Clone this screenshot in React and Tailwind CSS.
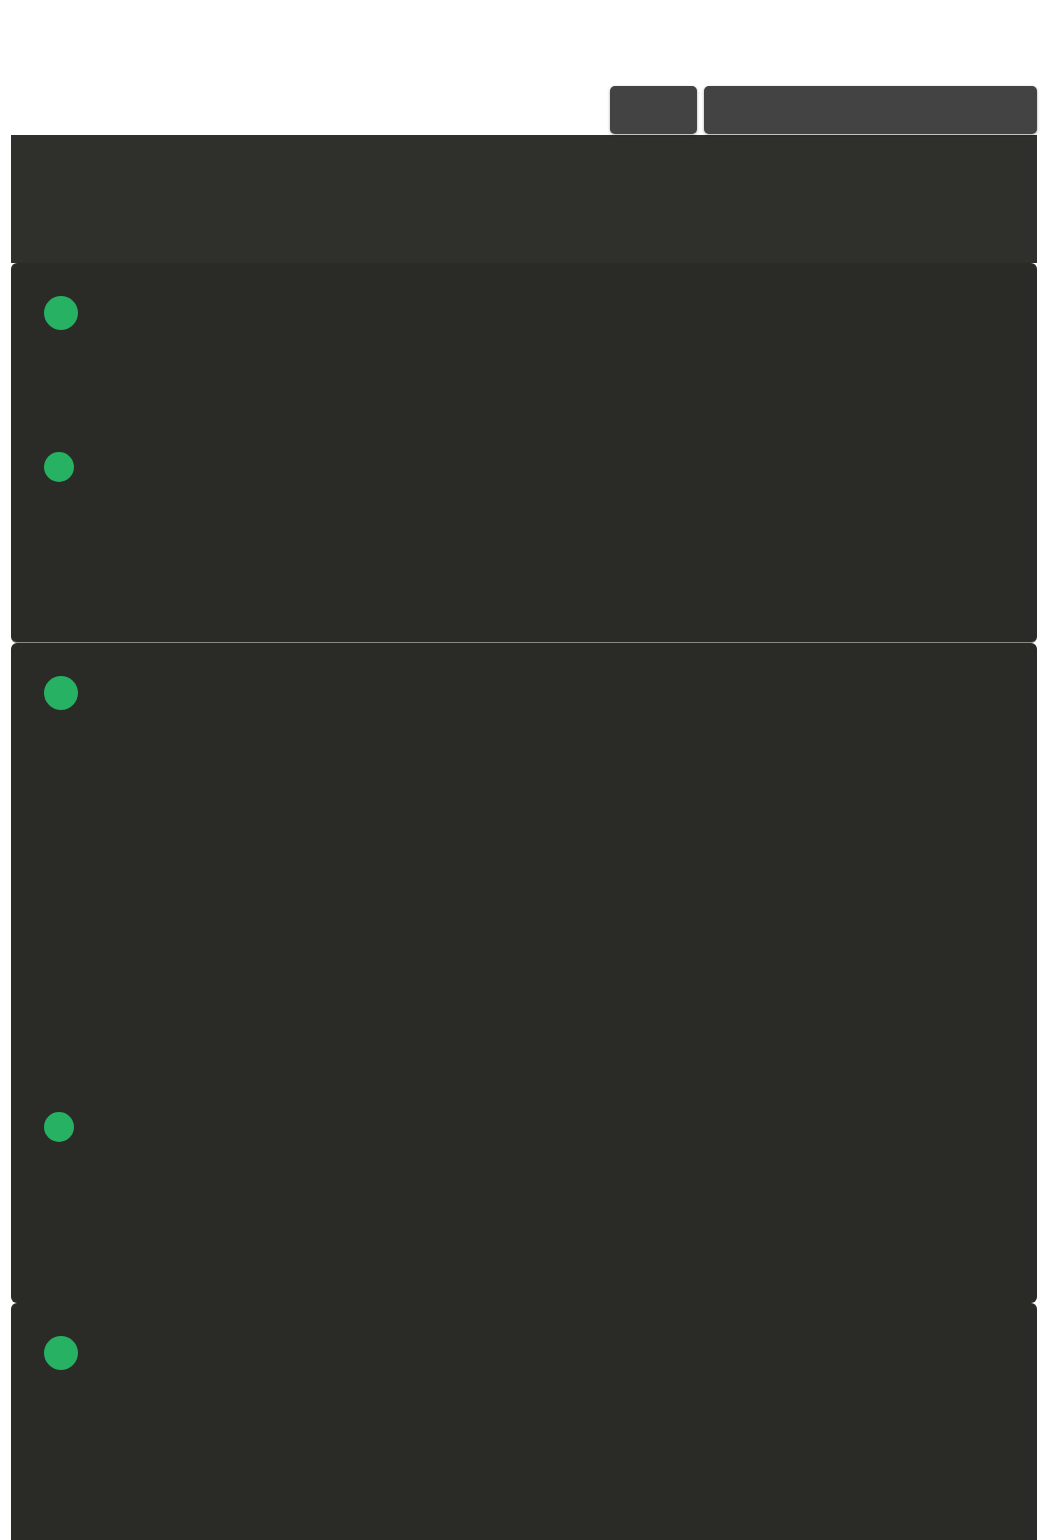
export default function App() {
  return (
    <div className="bg-white min-h-[1540px] px-[11px] pt-[86px] overflow-hidden" style={{ fontFamily: '"Liberation Sans", sans-serif' }}>
      <div className="flex justify-end gap-[7px] h-[48px]">
        <div className="w-[87px] h-[48px] rounded-[5px] bg-[#434343] shadow-[0_1px_3px_rgba(0,0,0,0.35)]" />
        <div className="w-[333px] h-[48px] rounded-[5px] bg-[#434343] shadow-[0_1px_3px_rgba(0,0,0,0.35)]" />
      </div>
      <div className="mt-px h-[128px] bg-[#2f2f2b]" />
      <div className="h-[380px] rounded-[6px] bg-[#2a2a26] border-b border-[#8a8a85] px-[33px] pt-[33px] flex flex-col items-start">
        <div className="w-[34px] h-[34px] rounded-full bg-[#27b162]" />
        <div className="mt-[122px] w-[30px] h-[30px] rounded-full bg-[#27b162]" />
      </div>
      <div className="h-[660px] rounded-[6px] bg-[#2a2a26] px-[33px] pt-[33px] flex flex-col items-start">
        <div className="w-[34px] h-[34px] rounded-full bg-[#27b162]" />
        <div className="mt-[402px] w-[30px] h-[30px] rounded-full bg-[#27b162]" />
      </div>
      <div className="h-[400px] rounded-[6px] bg-[#2a2a26] px-[33px] pt-[33px] flex flex-col items-start">
        <div className="w-[34px] h-[34px] rounded-full bg-[#27b162]" />
      </div>
    </div>
  );
}
